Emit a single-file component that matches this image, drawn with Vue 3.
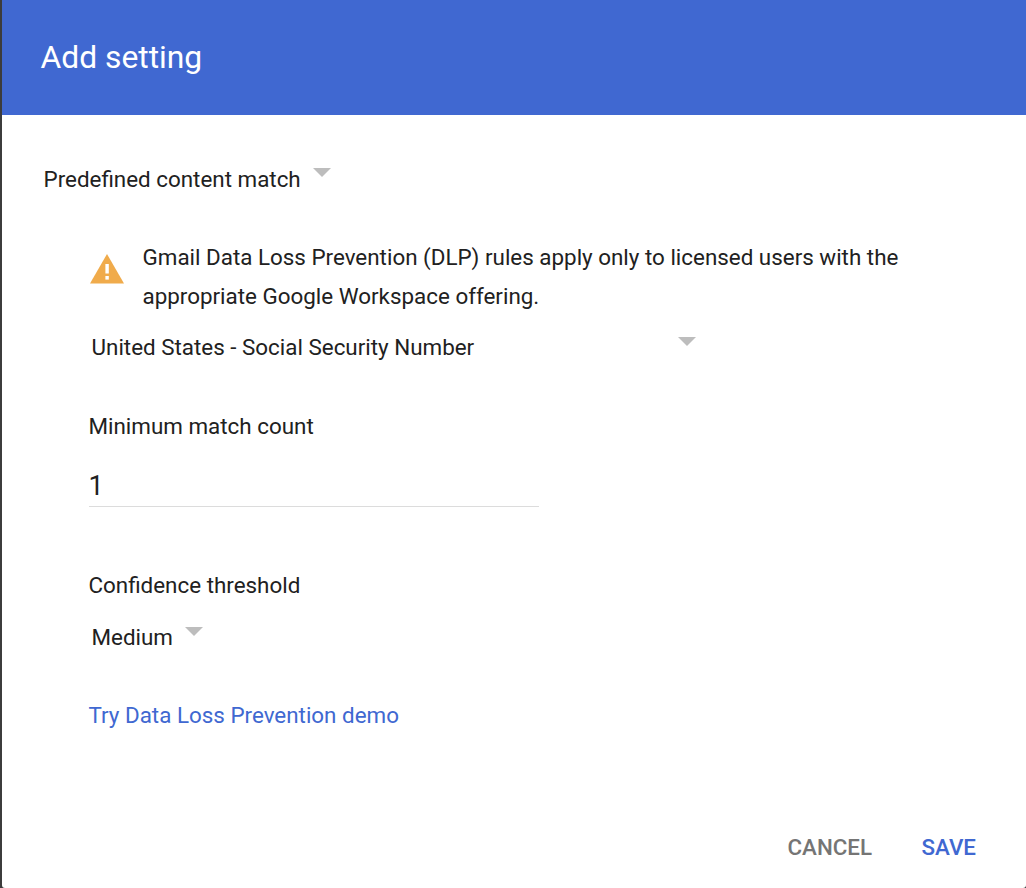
<script setup>
</script>

<template>
  <div class="dialog">
    <header class="head">Add setting</header>
    <main class="body">
      <div class="select top">
        <span>Predefined content match</span>
        <i class="arrow"></i>
      </div>
      <section class="inner">
        <div class="warn">
          <svg class="warn-icon" width="34" height="30" viewBox="0 0 34 30">
            <path d="M17 0 34 29.5H0Z" fill="#f0ab4b" />
            <rect x="15.4" y="10" width="3.4" height="9.5" fill="#fff" />
            <rect x="15.4" y="22" width="3.4" height="3.6" fill="#fff" />
          </svg>
          <p>Gmail Data Loss Prevention (DLP) rules apply only to licensed users with the appropriate Google Workspace offering.</p>
        </div>
        <div class="select type">
          <span>United States - Social Security Number</span>
          <i class="arrow"></i>
        </div>
        <label class="label count">Minimum match count</label>
        <div class="input">1</div>
        <label class="label conf">Confidence threshold</label>
        <div class="select medium">
          <span>Medium</span>
          <i class="arrow"></i>
        </div>
        <a class="link">Try Data Loss Prevention demo</a>
      </section>
    </main>
    <footer class="foot">
      <button class="cancel">CANCEL</button>
      <button class="save">SAVE</button>
    </footer>
  </div>
</template>

<style>
html, body { margin: 0; background: #3c3c3c; }
</style>

<style scoped>
.dialog {
  margin-left: 2px;
  width: 1024px;
  height: 888px;
  background: #fff;
  display: flex;
  flex-direction: column;
  font-family: Roboto, "Liberation Sans", sans-serif;
  font-size: 22.4px;
  color: #212121;
  border-bottom-right-radius: 3px;
  border-bottom-left-radius: 3px;
  overflow: hidden;
}
.head {
  height: 115px;
  flex: none;
  box-sizing: border-box;
  padding: 38px 0 0 38.5px;
  background: #4068d1;
  color: #fff;
  font-size: 31.8px;
  line-height: 38px;
}
.body { flex: 1; padding: 0 0 0 41.5px; }
.select { display: flex; line-height: 28px; position: relative; }
.top { margin-top: 50px; }
.arrow {
  width: 0;
  height: 0;
  border-left: 9px solid transparent;
  border-right: 9px solid transparent;
  border-top: 9px solid #bdbdbd;
  margin: 3px 0 0 12.5px;
}
.inner { padding: 0 0 0 45px; }
.warn { display: flex; margin-top: 55px; width: 830px; }
.warn-icon { flex: none; margin: 6px 18.5px 0 1.5px; width: 34px; height: 30px; }
.warn p { margin: 0; line-height: 39px; margin-top: -10px; }
.type { margin: 17px 0 0 3px; width: 604.5px; justify-content: space-between; }
.type .arrow { margin-top: 4px; }
.label { display: block; line-height: 28px; }
.count { margin-top: 51px; }
.input {
  width: 450px;
  height: 42px;
  border-bottom: 1px solid #dcdcdc;
  font-size: 27px;
  line-height: 44px;
  margin-top: 24px;
  box-sizing: content-box;
}
.conf { margin-top: 64px; }
.medium { margin: 24px 0 0 3px; }
.medium .arrow { margin-top: 4px; }
.link { display: block; margin-top: 50px; line-height: 28px; color: #4068d1; }
.foot {
  flex: none;
  display: flex;
  justify-content: flex-end;
  gap: 49.5px;
  padding: 0 50px 27px 0;
}
button {
  border: 0;
  background: none;
  padding: 0;
  font: 500 22.35px/28px Roboto, "Liberation Sans", sans-serif;
}
.cancel { color: #757575; }
.save { color: #4068d1; }
</style>
